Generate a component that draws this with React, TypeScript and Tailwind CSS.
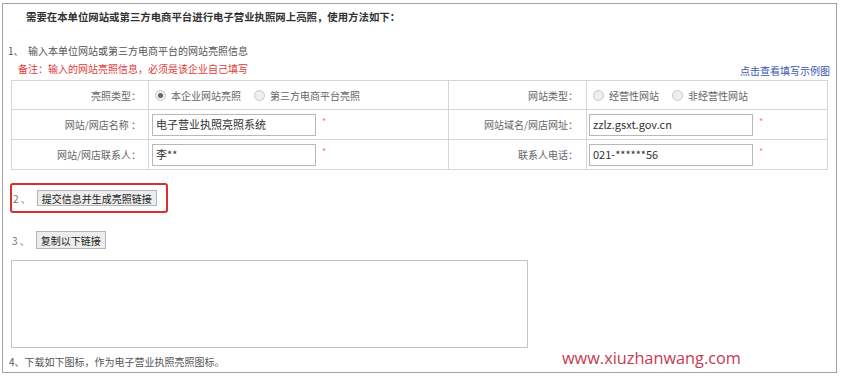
const cjk = "font-['Noto_Sans_CJK_SC','Noto_Sans',sans-serif]";

function Radio({ checked }: { checked?: boolean }) {
  return (
    <span className="inline-flex h-[11px] w-[11px] items-center justify-center rounded-full border border-[#c8c8c8] bg-[#eeeeee]">
      {checked && <span className="h-[5px] w-[5px] rounded-full bg-[#666]" />}
    </span>
  );
}

function Field({ value }: { value: string }) {
  return (
    <div className="flex items-center">
      <div className="flex h-[22px] w-[164px] items-center border border-[#b8b8b8] bg-white pl-[3px] text-[11px] text-[#333]">
        {value}
      </div>
      <span className="ml-[6px] -mt-[6px] text-[9px] text-[#f08080]">*</span>
    </div>
  );
}

export default function App() {
  return (
    <div className={`relative h-[379px] w-[845px] overflow-hidden bg-white ${cjk}`}>
      <div className="ml-[2px] mt-[3px] h-[370px] w-[835px] border border-[#a0a0a0]">
        {/* title */}
        <div className="pl-[23px] pt-[6px] text-[10.4px] font-semibold leading-[14px] text-[#333]">
          需要在本单位网站或第三方电商平台进行电子营业执照网上亮照，使用方法如下：
        </div>

        <div className="mt-[20px] pl-[5px] text-[10px] leading-[14px] text-[#555]">
          1、&nbsp; 输入本单位网站或第三方电商平台的网站亮照信息
        </div>

        <div className="mt-[4px] flex items-end justify-between pl-[15px] pr-[6px] text-[10px] leading-[14px]">
          <span className="text-[#e23a3a]">备注：输入的网站亮照信息，必须是该企业自己填写</span>
          <span className="translate-y-[2px] text-[#3a55b0]">点击查看填写示例图</span>
        </div>

        {/* form table */}
        <table className="ml-[8px] mt-[4px] w-[817px] border-collapse text-[10px] text-[#666]">
          <tbody>
            <tr className="h-[29px]">
              <td className="w-[137px] border border-[#d6d6d6] pr-[7px] text-right">亮照类型：</td>
              <td className="w-[300px] border border-[#d6d6d6] pl-[6px]">
                <div className="flex items-center gap-[5px]">
                  <Radio checked />
                  <span>本企业网站亮照</span>
                  <span className="ml-[3px]" />
                  <Radio />
                  <span>第三方电商平台亮照</span>
                </div>
              </td>
              <td className="w-[138px] border border-[#d6d6d6] pr-[8px] text-right">网站类型：</td>
              <td className="border border-[#d6d6d6] pl-[6px]">
                <div className="flex items-center gap-[5px]">
                  <Radio />
                  <span>经营性网站</span>
                  <span className="ml-[3px]" />
                  <Radio />
                  <span>非经营性网站</span>
                </div>
              </td>
            </tr>
            <tr className="h-[30px]">
              <td className="border border-[#d6d6d6] pr-[7px] text-right">网站/网店名称 ：</td>
              <td className="border border-[#d6d6d6] pl-[3px]">
                <Field value="电子营业执照亮照系统" />
              </td>
              <td className="border border-[#d6d6d6] pr-[8px] text-right">网站域名/网店网址：</td>
              <td className="border border-[#d6d6d6] pl-[2px]">
                <Field value="zzlz.gsxt.gov.cn" />
              </td>
            </tr>
            <tr className="h-[30px]">
              <td className="border border-[#d6d6d6] pr-[7px] text-right">网站/网店联系人：</td>
              <td className="border border-[#d6d6d6] pl-[3px]">
                <Field value="李**" />
              </td>
              <td className="border border-[#d6d6d6] pr-[8px] text-right">联系人电话：</td>
              <td className="border border-[#d6d6d6] pl-[2px]">
                <Field value="021-******56" />
              </td>
            </tr>
          </tbody>
        </table>

        {/* step 2 */}
        <div className="ml-[7px] mt-[13px] flex h-[30px] w-[158px] items-center rounded-[3px] border-2 border-[#d9302c] pl-[1px] text-[10px] text-[#777]">
          <span>2 、</span>
          <span className="ml-[6px] flex h-[16px] items-center border border-[#b5b5b5] bg-[#ededed] px-[4px] text-[#222]">
            提交信息并生成亮照链接
          </span>
        </div>

        {/* step 3 */}
        <div className="ml-[9px] mt-[18px] flex items-center text-[10px] text-[#777]">
          <span>3 、</span>
          <span className="ml-[6px] flex h-[18px] items-center border border-[#b5b5b5] bg-[#ededed] px-[4px] text-[#222]">
            复制以下链接
          </span>
        </div>

        <div className="ml-[8px] mt-[11px] h-[88px] w-[517px] border border-[#c4c4c4] bg-white" />

        <div className="ml-[6px] mt-[7px] text-[10px] leading-[14px] text-[#555]">
          4、下载如下图标，作为电子营业执照亮照图标。
        </div>
      </div>

      {/* watermark */}
      <div className="absolute left-[562px] top-[348px] font-['Open_Sans',sans-serif] text-[16.3px] leading-[20px] text-[#c43a52]">
        www.xiuzhanwang.com
      </div>
    </div>
  );
}
